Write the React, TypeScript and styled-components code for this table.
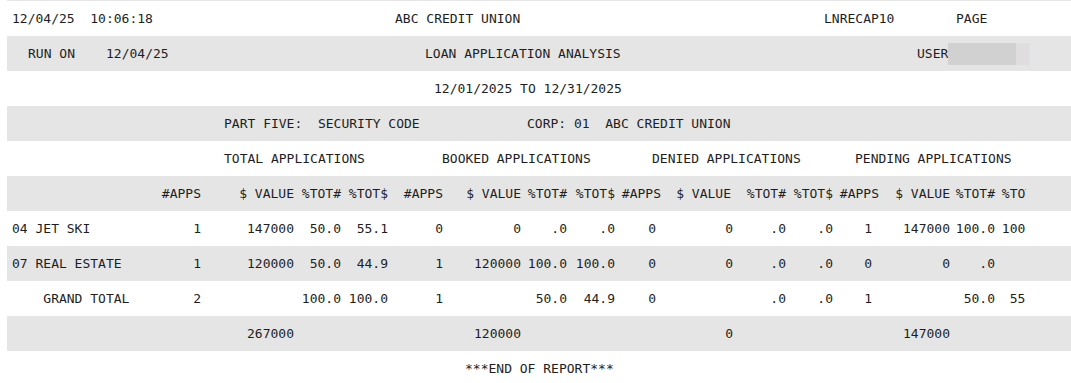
import React from 'react';
import styled, { createGlobalStyle } from 'styled-components';

const GlobalStyle = createGlobalStyle`
  body {
    margin: 0;
    background: #ffffff;
  }
`;

const Page = styled.div`
  padding-left: 7px;
  overflow: hidden;
`;

const Report = styled.div`
  border-top: 1px solid #e5e5e5;
  font-family: 'DejaVu Sans Mono', 'Liberation Mono', monospace;
  font-size: 13px;
  color: #1e1e1e;
`;

const Band = styled.div<{ $shaded?: boolean; $indent: number }>`
  display: flex;
  align-items: center;
  height: 35px;
  padding-left: ${(p) => p.$indent}px;
  background: ${(p) => (p.$shaded ? '#e5e5e5' : '#ffffff')};
  white-space: pre;
`;

const Slot = styled.span<{ $w: number }>`
  flex: none;
  display: flex;
  align-items: center;
  width: ${(p) => p.$w}px;
`;

const Masked = styled.span`
  display: inline-block;
  width: 83px;
  height: 22px;
  background: linear-gradient(
    to right,
    #d1d1d1 0 68px,
    #dfdddd 68px 81px,
    #e0e4e8 81px
  );
`;

// table columns: label, then 4 x (#APPS, $ VALUE, %TOT#, %TOT$); the report is cut at the last one
const COLUMNS = '153px 41px 93px 47px 47px 55px 78px 46px 48px 41px 77px 53px 47px 39px 78px 45px 31px 1fr';

const TableRow = styled.div<{ $shaded?: boolean }>`
  display: grid;
  grid-template-columns: ${COLUMNS};
  align-items: center;
  height: 35px;
  background: ${(p) => (p.$shaded ? '#e5e5e5' : '#ffffff')};
  white-space: pre;
`;

const Label = styled.span`
  padding-left: 5px;
`;

const Num = styled.span<{ $nudge?: number }>`
  text-align: right;
  margin-right: ${(p) => -(p.$nudge ?? 0)}px;
`;

const Clip = styled.span`
  overflow: hidden;
`;

const ClipInner = styled.span`
  display: block;
  width: 46px;
  text-align: right;
`;

type Piece = [number, React.ReactNode];

const Line = ({ shaded, pieces }: { shaded?: boolean; pieces: Piece[] }) => (
  <Band $shaded={shaded} $indent={pieces[0][0] - 7}>
    {pieces.map(([x, node], i) => {
      const next = i + 1 < pieces.length ? pieces[i + 1][0] : x + 220;
      return (
        <Slot key={i} $w={next - x}>
          {node}
        </Slot>
      );
    })}
  </Band>
);

type Cells = string[];

const rows: { label: string; cells: Cells; shaded?: boolean }[] = [
  {
    label: '04 JET SKI',
    cells: ['1', '147000', '50.0', '55.1', '0', '0', '.0', '.0', '0', '0', '.0', '.0', '1', '147000', '100.0', '100.0'],
  },
  {
    label: '07 REAL ESTATE',
    shaded: true,
    cells: ['1', '120000', '50.0', '44.9', '1', '120000', '100.0', '100.0', '0', '0', '.0', '.0', '0', '0', '.0', ''],
  },
  {
    label: '    GRAND TOTAL',
    cells: ['2', '', '100.0', '100.0', '1', '', '50.0', '44.9', '0', '', '.0', '.0', '1', '', '50.0', '55.1'],
  },
  {
    label: '',
    shaded: true,
    cells: ['', '267000', '', '', '', '120000', '', '', '', '0', '', '', '', '147000', '', ''],
  },
];

const headNudge = [0, 0, 0, 0, 0, 0, 0, 0, 5, -2, 0, 0, 7, 0, 0];

const DataRow = ({ label, cells, shaded }: { label: string; cells: Cells; shaded?: boolean }) => (
  <TableRow $shaded={shaded}>
    <Label>{label}</Label>
    {cells.slice(0, 15).map((c, i) => (
      <Num key={i}>{c}</Num>
    ))}
    <Clip>
      <ClipInner>{cells[15]}</ClipInner>
    </Clip>
  </TableRow>
);

const HeadRow = () => {
  const group = ['#APPS', '$ VALUE', '%TOT#', '%TOT$'];
  const titles = [...group, ...group, ...group, ...group];
  return (
    <TableRow $shaded>
      <Label />
      {titles.slice(0, 15).map((t, i) => (
        <Num key={i} $nudge={headNudge[i]}>
          {t}
        </Num>
      ))}
      <Clip>
        <ClipInner>{titles[15]}</ClipInner>
      </Clip>
    </TableRow>
  );
};

export default function App() {
  return (
    <Page>
      <GlobalStyle />
      <Report>
        <Line
          pieces={[
            [12, '12/04/25  10:06:18'],
            [395, 'ABC CREDIT UNION'],
            [824, 'LNRECAP10'],
            [956, 'PAGE'],
          ]}
        />
        <Line
          shaded
          pieces={[
            [28, 'RUN ON'],
            [106, '12/04/25'],
            [425, 'LOAN APPLICATION ANALYSIS'],
            [
              917,
              <>
                USER
                <Masked />
              </>,
            ],
          ]}
        />
        <Line pieces={[[434, '12/01/2025 TO 12/31/2025']]} />
        <Line
          shaded
          pieces={[
            [224, 'PART FIVE:  SECURITY CODE'],
            [527, 'CORP: 01  ABC CREDIT UNION'],
          ]}
        />
        <Line
          pieces={[
            [224, 'TOTAL APPLICATIONS'],
            [442, 'BOOKED APPLICATIONS'],
            [652, 'DENIED APPLICATIONS'],
            [855, 'PENDING APPLICATIONS'],
          ]}
        />
        <HeadRow />
        {rows.map((r, i) => (
          <DataRow key={i} label={r.label} cells={r.cells} shaded={r.shaded} />
        ))}
        <Line pieces={[[465, '***END OF REPORT***']]} />
      </Report>
    </Page>
  );
}
